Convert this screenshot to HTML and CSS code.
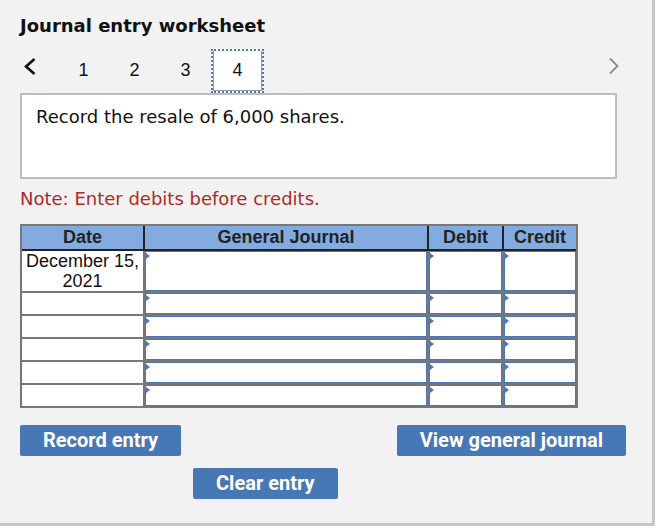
FILE: index.html
```html
<!DOCTYPE html>
<html>
<head>
<meta charset="utf-8">
<title>Journal entry worksheet</title>
<link rel="stylesheet" href="styles.css">
</head>
<body>
<div class="panel">
  <h1 class="title">Journal entry worksheet</h1>
  <div class="tabs">
    <div class="prev">
      <svg width="38" height="44" viewBox="0 0 38 44"><polyline points="14.5,10 6,17.5 14.5,25" fill="none" stroke="#111" stroke-width="2.6"/></svg>
    </div>
    <div class="tab">1</div>
    <div class="tab">2</div>
    <div class="tab">3</div>
    <div class="tab active">4</div>
    <div class="next">
      <svg width="12" height="44" viewBox="0 0 12 44"><polyline points="2,9.5 9.5,17 2,24.5" fill="none" stroke="#8c8c8c" stroke-width="1.8"/></svg>
    </div>
  </div>
  <div class="question">Record the resale of 6,000 shares.</div>
  <p class="note">Note: Enter debits before credits.</p>
  <div class="journal">
    <div class="jhead">
      <div>Date</div>
      <div>General Journal</div>
      <div>Debit</div>
      <div>Credit</div>
    </div>
    <div class="jbody">
      <div class="date">December 15,<br>2021</div><div class="inp"></div><div class="inp"></div><div class="inp"></div>
      <div class="date"></div><div class="inp"></div><div class="inp"></div><div class="inp"></div>
      <div class="date"></div><div class="inp"></div><div class="inp"></div><div class="inp"></div>
      <div class="date"></div><div class="inp"></div><div class="inp"></div><div class="inp"></div>
      <div class="date"></div><div class="inp"></div><div class="inp"></div><div class="inp"></div>
      <div class="date"></div><div class="inp"></div><div class="inp"></div><div class="inp"></div>
    </div>
  </div>
  <div class="actions">
    <div class="row1">
      <button class="btn">Record entry</button>
      <button class="btn">View general journal</button>
    </div>
    <div class="row2">
      <button class="btn">Clear entry</button>
    </div>
  </div>
</div>
</body>
</html>
```
FILE: styles.css
```css
html, body {
  margin: 0;
  padding: 0;
  background: #ffffff;
}

.panel {
  box-sizing: border-box;
  width: 655px;
  height: 526px;
  padding-left: 20px;
  background: #f2f2f2;
  border-right: 3px solid #c6c6c6;
  border-bottom: 3px solid #c6c6c6;
  overflow: hidden;
}

.title {
  margin: 0;
  padding-top: 15px;
  font: bold 18px/21px "DejaVu Sans", Verdana, sans-serif;
  color: #111;
}

.tabs {
  display: flex;
  width: 600px;
  height: 44px;
  margin-top: 13px;
}

.prev {
  width: 38px;
  height: 44px;
}

.prev svg, .next svg {
  display: block;
}

.tab {
  box-sizing: border-box;
  width: 51px;
  height: 44px;
  padding-top: 9px;
  border: 2px solid transparent;
  text-align: center;
  font: 18px/21px "Liberation Sans", Arial, sans-serif;
  color: #111;
}

.tab.active {
  width: 53px;
  background: #fff;
  border: 2px dotted #4a7bc0;
  box-shadow: inset 1px 0 0 #999, inset -1px 0 0 #999, inset 0 -1px 0 #999;
}

.next {
  margin-left: auto;
  width: 12px;
}

.question {
  box-sizing: border-box;
  width: 597px;
  height: 86px;
  padding: 11px 14px;
  background: #fff;
  border: 2px solid #bdbdbd;
  font: 18px/21px "DejaVu Sans", Verdana, sans-serif;
  color: #111;
}

.note {
  margin: 9px 0 0;
  font: 18px/21px "DejaVu Sans", Verdana, sans-serif;
  color: #ae2a25;
}

.journal {
  width: 554px;
  margin-top: 15px;
  border: 2px solid #777;
  background: #777;
}

.jhead {
  display: grid;
  grid-template-columns: 121px 282px 73px 72px;
  column-gap: 2px;
  background: #222;
  border-bottom: 2px solid #222;
}

.jhead div {
  height: 23px;
  background: #83abe0;
  text-align: center;
  font: bold 18px/23px "Liberation Sans", Arial, sans-serif;
  color: #222;
}

.jbody {
  display: grid;
  grid-template-columns: 121px 282px 73px 72px;
  grid-template-rows: 40px repeat(5, 21px);
  gap: 2px;
}

.date {
  background: #fff;
  text-align: center;
  font: 18px/20px "Liberation Sans", Arial, sans-serif;
  color: #111;
}

.inp {
  position: relative;
  background: #fff;
  border: 1px solid #4a77b5;
}

.inp::before {
  content: "";
  position: absolute;
  left: 0;
  top: 1px;
  border-left: 4px solid #4a7bc0;
  border-top: 3px solid transparent;
  border-bottom: 3px solid transparent;
}

.actions {
  margin-top: 17px;
}

.row1 {
  display: flex;
  justify-content: space-between;
  width: 606px;
}

.row2 {
  margin-top: 12px;
  padding-left: 173px;
}

.btn {
  height: 31px;
  padding: 0 23px;
  background: #4877b5;
  color: #fff;
  border: none;
  border-radius: 2px;
  font: bold 20px/31px Roboto, "Liberation Sans", sans-serif;
}
```
